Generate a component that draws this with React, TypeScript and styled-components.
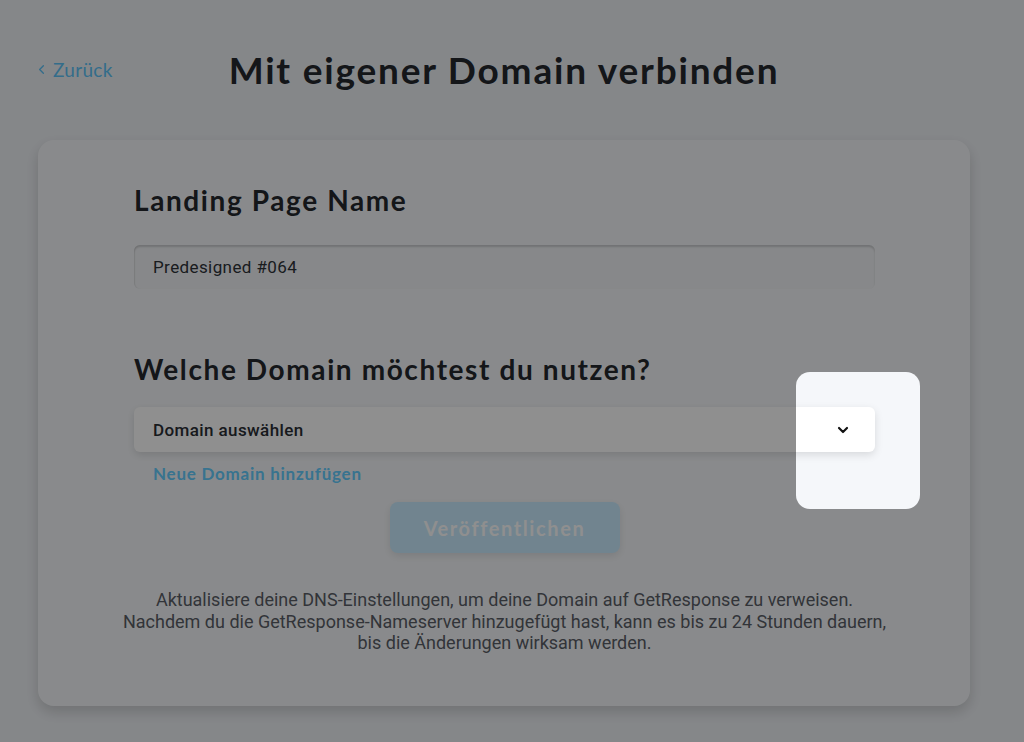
import React, { FC, ReactElement } from "react";
import styled, { createGlobalStyle } from "styled-components";
import { ChevronLeft, ChevronDown } from "lucide-react";

const GlobalStyle = createGlobalStyle`
  html, body {
    margin: 0;
    padding: 0;
    background: #eef1f5;
    font-family: Roboto, "Liberation Sans", sans-serif;
  }
  * {
    box-sizing: border-box;
  }
`;

const App: FC = (): ReactElement => {
  return (
    <>
      <GlobalStyle />
      <StyledPage>
        <StyledHeader>
          <StyledBackLink href="#">
            <ChevronLeft size={15} strokeWidth={2.2} />
            Zurück
          </StyledBackLink>
          <StyledTitle>Mit eigener Domain verbinden</StyledTitle>
          <span />
        </StyledHeader>

        <StyledCard>
          <StyledHeading>Landing Page Name</StyledHeading>
          <StyledInput value="Predesigned #064" readOnly />

          <StyledHeading $spaced>Welche Domain möchtest du nutzen?</StyledHeading>
          <StyledSelect>
            <span>Domain auswählen</span>
            <ChevronDown size={16} strokeWidth={3.2} />
          </StyledSelect>
          <StyledAddLink href="#">Neue Domain hinzufügen</StyledAddLink>

          <StyledPublishButton disabled>Veröffentlichen</StyledPublishButton>

          <StyledHint>
            Aktualisiere deine DNS-Einstellungen, um deine Domain auf GetResponse zu verweisen.
            <br />
            Nachdem du die GetResponse-Nameserver hinzugefügt hast, kann es bis zu 24 Stunden dauern,
            <br />
            bis die Änderungen wirksam werden.
          </StyledHint>
        </StyledCard>

        <StyledSpotlight />
      </StyledPage>
    </>
  );
};

export default App;

const StyledPage = styled.div`
  position: relative;
  width: 1024px;
  height: 742px;
  overflow: hidden;
  padding: 0 54px 0 38px;
`;

const StyledHeader = styled.header`
  display: grid;
  grid-template-columns: 1fr auto 1fr;
  align-items: center;
  padding-top: 42px;
  height: 96px;
`;

const StyledBackLink = styled.a`
  display: flex;
  align-items: center;
  gap: 4px;
  justify-self: start;
  margin-left: -4px;
  color: #5cc2f7;
  font-family: Lato, "Open Sans", sans-serif;
  font-size: 19px;
  letter-spacing: 0.3px;
  text-decoration: none;
`;

const StyledTitle = styled.h1`
  margin: 0;
  font-family: Lato, "Open Sans", sans-serif;
  font-size: 37px;
  font-weight: 700;
  color: #24282e;
  letter-spacing: 1.8px;
`;

const StyledCard = styled.main`
  display: flex;
  flex-direction: column;
  margin-top: 44px;
  padding: 44px 95px 52px 96px;
  background: #f5f7fa;
  border-radius: 16px;
  box-shadow: 0 6px 14px rgba(0, 0, 0, 0.16);
`;

const StyledHeading = styled.h2<{ $spaced?: boolean }>`
  margin: ${({ $spaced }) => ($spaced ? "64px" : "0")} 0 0;
  font-family: Lato, "Open Sans", sans-serif;
  font-size: 28px;
  line-height: 32px;
  font-weight: 700;
  color: #24282e;
  letter-spacing: 1.6px;
`;

const StyledInput = styled.input`
  margin-top: 29px;
  height: 44px;
  padding: 0 19px;
  border: none;
  border-radius: 6px;
  background: #f1f3f6;
  box-shadow: inset 0 2px 2px rgba(0, 0, 0, 0.16), inset 1px 0 1px rgba(0, 0, 0, 0.06);
  font-family: Roboto, sans-serif;
  font-size: 17px;
  letter-spacing: 0.4px;
  color: #2e3238;
  outline: none;
`;

const StyledSelect = styled.div`
  display: flex;
  align-items: center;
  justify-content: space-between;
  margin-top: 22px;
  height: 45px;
  padding: 0 24px 0 19px;
  background: #ffffff;
  border-radius: 6px;
  box-shadow: 0 3px 8px rgba(0, 0, 0, 0.12);
  font-size: 17px;
  font-weight: 500;
  letter-spacing: 0.4px;
  color: #2a2e35;

  svg {
    color: #111;
  }
`;

const StyledAddLink = styled.a`
  align-self: flex-start;
  margin: 12px 0 0 19px;
  line-height: 20px;
  font-family: Lato, "Open Sans", sans-serif;
  font-size: 17px;
  font-weight: 700;
  letter-spacing: 0.75px;
  color: #64cdff;
  text-decoration: none;
`;

const StyledPublishButton = styled.button`
  align-self: center;
  margin-top: 18px;
  width: 230px;
  height: 51px;
  border: none;
  border-radius: 8px;
  background: #c9ecff;
  box-shadow: 0 3px 8px rgba(0, 0, 0, 0.1);
  font-family: Lato, "Open Sans", sans-serif;
  font-size: 20px;
  font-weight: 700;
  letter-spacing: 1.6px;
  color: #ffffff;
`;

const StyledHint = styled.p`
  margin: 36px -40px 0;
  text-align: center;
  font-size: 18px;
  line-height: 21.5px;
  color: #5a5e66;
`;

const StyledSpotlight = styled.div`
  position: absolute;
  left: 796px;
  top: 372px;
  width: 124px;
  height: 137px;
  border-radius: 14px;
  box-shadow: 0 0 0 3000px rgba(0, 0, 0, 0.44);
  pointer-events: none;
`;
